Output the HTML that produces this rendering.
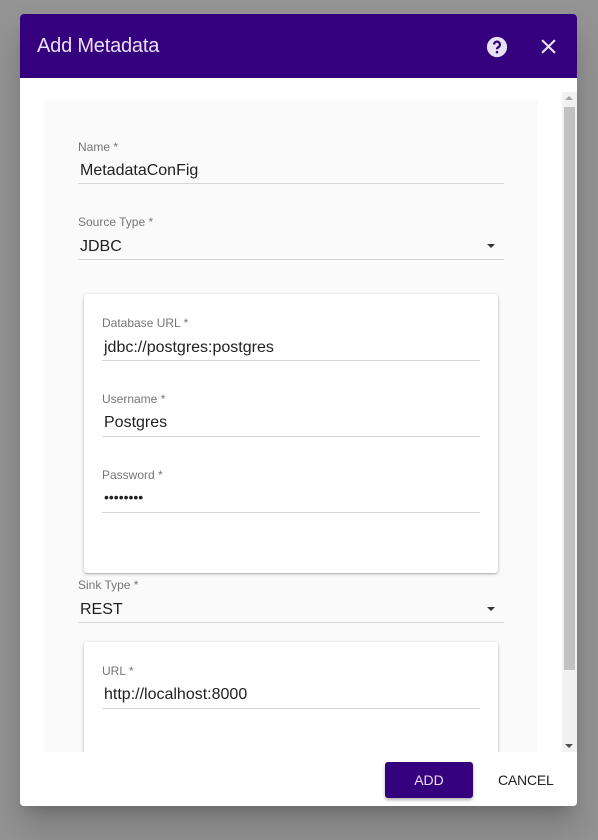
<!DOCTYPE html>
<html><head><style>
body{margin:0;width:598px;height:840px;background:#949494;font-family:"Liberation Sans",sans-serif;position:relative;overflow:hidden}
.dlg{position:absolute;left:20px;top:14px;width:557px;height:792px;background:#fff;border-radius:4px;overflow:hidden;box-shadow:0 11px 15px -7px rgba(0,0,0,.2),0 24px 38px 3px rgba(0,0,0,.14)}
.hdr{position:absolute;left:0;top:0;width:557px;height:64px;background:#35007d;color:#e8e0f5}
.hdr .t{position:absolute;left:17px;top:21px;font-size:20px;letter-spacing:-0.2px}
.ab{position:absolute}
.panel{position:absolute;left:24px;top:86px;width:494px;height:680px;background:#fafafa}
.lbl{position:absolute;font-size:12px;color:#757575}
.val{position:absolute;font-size:16px;color:#212121}
.ul{position:absolute;height:1px;background:#d6d6d6}
.card{position:absolute;left:64px;width:414px;background:#fff;border-radius:3px;box-shadow:0 1px 3px rgba(0,0,0,.25),0 1px 1px rgba(0,0,0,.12)}
.arr{position:absolute;width:0;height:0;border-left:4px solid transparent;border-right:4px solid transparent;border-top:4px solid #333}
</style></head><body>
<div class="dlg">
<div class="hdr"><div class="t">Add Metadata</div>
<svg class="ab" style="left:466px;top:22px" width="22" height="22" viewBox="0 0 24 24"><circle cx="12" cy="12" r="11" fill="#e8e0f5"/><path d="M8.8 9.3a3.2 3.2 0 1 1 4.6 2.9c-.9.5-1.4 1-1.4 2.2" stroke="#35007d" stroke-width="2.4" fill="none"/><circle cx="12" cy="17.6" r="1.4" fill="#35007d"/></svg>
<svg class="ab" style="left:521px;top:25px" width="15" height="15" viewBox="0 0 14 14"><path d="M1 1L13 13M13 1L1 13" stroke="#e8e0f5" stroke-width="2"/></svg>
</div>
<div class="panel"></div>
<div class="ab" style="left:542px;top:78px;width:15px;height:660px;background:#f1f1f1"></div>
<div class="ab" style="left:544px;top:93px;width:11px;height:563px;background:#c1c1c1"></div>
<div class="arr" style="left:545px;top:82px;border-top:none;border-bottom:4px solid #a3a3a3"></div>
<div class="arr" style="left:545px;top:730px;border-top-color:#505050"></div>

<div class="lbl" style="left:58px;top:126px">Name *</div>
<div class="val" style="left:60px;top:148px">MetadataConFig</div>
<div class="ul" style="left:58px;top:169px;width:426px"></div>
<div class="lbl" style="left:58px;top:201px">Source Type *</div>
<div class="val" style="left:60px;top:224px">JDBC</div>
<div class="arr" style="left:467px;top:230px"></div>
<div class="ul" style="left:58px;top:245px;width:426px"></div>

<div class="card" style="top:280px;height:279px"></div>
<div class="lbl" style="left:82px;top:302px">Database URL *</div>
<div class="val" style="left:84px;top:325px">jdbc://postgres:postgres</div>
<div class="ul" style="left:82px;top:346px;width:378px"></div>
<div class="lbl" style="left:82px;top:378px">Username *</div>
<div class="val" style="left:84px;top:400px">Postgres</div>
<div class="ul" style="left:82px;top:422px;width:378px"></div>
<div class="lbl" style="left:82px;top:454px">Password *</div>
<div class="val" style="left:84px;top:475px;font-size:14px">••••••••</div>
<div class="ul" style="left:82px;top:498px;width:378px"></div>

<div class="lbl" style="left:58px;top:564px">Sink Type *</div>
<div class="val" style="left:60px;top:587px">REST</div>
<div class="arr" style="left:467px;top:593px"></div>
<div class="ul" style="left:58px;top:608px;width:426px"></div>

<div class="card" style="top:628px;height:160px"></div>
<div class="lbl" style="left:82px;top:650px">URL *</div>
<div class="val" style="left:84px;top:672px">http://localhost:8000</div>
<div class="ul" style="left:82px;top:694px;width:378px"></div>

<div class="ab" style="left:0;top:738px;width:557px;height:54px;background:#fff"></div>
<div class="ab" style="left:365px;top:748px;width:88px;height:36px;background:#35007d;border-radius:3px;box-shadow:0 2px 3px rgba(0,0,0,.3);color:#e8e0f5;font-size:14px;line-height:36px;text-align:center">ADD</div>
<div class="ab" style="left:478px;top:758px;font-size:14px;color:#222;letter-spacing:-0.2px">CANCEL</div>
</div>
</body></html>
